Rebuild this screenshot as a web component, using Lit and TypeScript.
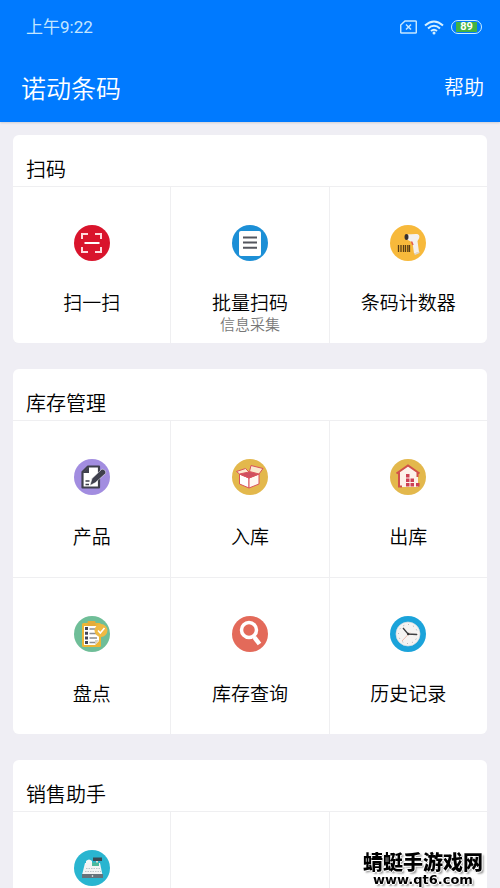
import { LitElement, html, svg, css, nothing } from "lit";
import { customElement, property } from "lit/decorators.js";

const icons: Record<string, unknown> = {
  scan: svg`<circle cx="18" cy="18" r="18" fill="#d9142c"/>
    <g fill="none" stroke="#fff" stroke-width="2">
      <path d="M8 14V9H14M21 9H27V14M27 22V27H21M14 27H8V22" stroke="#ffd9dd"/>
      <path d="M10.500 18H25.500"/></g>`,
  batch: svg`<circle cx="18" cy="18" r="18" fill="#1c8fd6"/>
    <rect x="7" y="6" width="22" height="25" rx="2" fill="#fff"/>
    <path d="M11 12.500H25M11 17.500H25M11 22.800H25" stroke="#54565e" stroke-width="2"/>`,
  counter: svg`<circle cx="18" cy="18" r="18" fill="#f7b93b"/>
    <path d="M8.500 20V27M11 20V27M13.500 20V27M15.500 20V27M17.800 20V27M19.500 20V27" stroke="#5a3d14" stroke-width="1.300"/>
    <path d="M16 9.500L26 9C29 9 30 11 29 13.500L27.500 16L29 27L24 28.500L22.500 17.500L16 14Z" fill="#f3f0ee"/>
    <path d="M24 28.500L29.500 26.500V28L25 30Z" fill="#ddd6cf"/>
    <ellipse cx="16.500" cy="12" rx="2" ry="3" fill="#38302e"/>
    <path d="M21.500 16.500L23 20" stroke="#e35a4d" stroke-width="1.500"/>`,
  product: svg`<circle cx="18" cy="18" r="18" fill="#a28de0"/>
    <path d="M14 7.500H25V28.500H8.500V13Z" fill="#fff" stroke="#3f404d" stroke-width="2.200" stroke-linejoin="round"/>
    <path d="M8.500 14L15 7.500V14Z" fill="#3f404d"/>
    <path d="M11.500 22H15.500M11.500 25.500H15" stroke="#3f404d" stroke-width="1.500"/>
    <path d="M16 26.500L18 19.500L27.500 10.500C29 9.500 32.500 11.500 31.500 14.500L21.500 23.500Z" fill="#3f404d" stroke="#fff" stroke-width=".5"/>`,
  inbound: svg`<circle cx="18" cy="18" r="18" fill="#e3b84c"/>
    <g stroke="#d9535c" stroke-width="1" stroke-linejoin="round">
      <path d="M7.500 15L17 19V29L7.500 25Z" fill="#fff"/>
      <path d="M17 19L27 15V25L17 29Z" fill="#fff8f2"/>
      <path d="M7.500 15L16 12.500L27 15L17 19Z" fill="#cf5060"/>
      <path d="M7.500 15L4.500 12.500L13.500 9.500L17 13Z" fill="#fbe9cf"/>
      <path d="M17.500 12.500L19 6.500L31 9.500L27 15Z" fill="#fbe9cf"/>
    </g>`,
  outbound: svg`<circle cx="18" cy="18" r="18" fill="#e3b84c"/>
    <path d="M9 13L18 7L28 13V28H9Z" fill="#fdf1eb"/>
    <path d="M6.500 14.500L18 6.500L29.500 14.500M9 13.500V27.500H12M27.500 13.500V18" fill="none" stroke="#d1504a" stroke-width="2"/>
    <path d="M16 15h3.500v3.500H16zM16 19.500h3.500v3.500H16zM20.500 19.500H24v3.500h-3.500zM16 24h3.500v3.500H16zM20.500 24H24v3.500h-3.500zM26 24h3.500v3.500H26z" fill="#cd4054"/>`,
  check: svg`<circle cx="18" cy="18" r="18" fill="#6fbe98"/>
    <rect x="8" y="7" width="19" height="24" rx="1.500" fill="#edb536"/>
    <path d="M10 10H25V25L21 29H10Z" fill="#fff"/>
    <path d="M25 24L21 29V24Z" fill="#d7d2c8"/>
    <rect x="13.500" y="5" width="8" height="5" rx="1" fill="#e4ac3b"/>
    <path d="M12.500 11V28" stroke="#414556" stroke-width="3" stroke-dasharray="3 1.700"/>
    <path d="M15.500 13H21M15.500 17.500H23M15.500 22H23M15.500 26.500H21" stroke="#8c8d90" stroke-width="1.500"/>
    <circle cx="27" cy="14.500" r="6.500" fill="#efb943"/>
    <path d="M24 14.500L26.300 17L30.500 12" fill="none" stroke="#fff" stroke-width="1.600"/>`,
  search: svg`<circle cx="18" cy="18" r="18" fill="#e36a5a"/>
    <circle cx="17" cy="14" r="7.500" fill="none" stroke="#fff" stroke-width="3.500"/>
    <path d="M21 19.500L23 22" stroke="#fff" stroke-width="3"/>
    <path d="M22.500 21.500L27.500 28" stroke="#fff" stroke-width="4.500"/>`,
  history: svg`<circle cx="18" cy="18" r="18" fill="#1ba3da"/>
    <circle cx="18" cy="18" r="12" fill="#f5f3f2" stroke="#d8dde0" stroke-width=".7"/>
    <circle cx="18" cy="18" r="9.500" fill="none" stroke="#9a9a9a" stroke-width="1" stroke-dasharray=".8 4.170"/>
    <path d="M18.500 18.500L13 12M17 18L27 18.500" stroke="#3f3f42" stroke-width="1.300"/>
    <path d="M20 16.500L12 25" stroke="#e8a08e" stroke-width=".7"/>
    <circle cx="18.300" cy="18" r="1.200" fill="#333"/>`,
  register: svg`<circle cx="18" cy="18" r="18" fill="#29b5d0"/>
    <path d="M12 11Q15 8 18 11V17H12Z" fill="#f4f7f7"/>
    <path d="M19 7.500H28V11H19Z" fill="#3b4a53"/><path d="M22 11H24V13H22Z" fill="#ddd"/>
    <path d="M11 13H26L28.500 25H8Z" fill="#f3f4f4"/>
    <path d="M18 12.500H25V16H18Z" fill="#4cb99c"/>
    <path d="M12 18.500H26M11 21.500H27" stroke="#bcc5c9" stroke-width="1" stroke-dasharray="1.500 1"/>
    <path d="M8 24H29V28H8Z" fill="#66727a"/><circle cx="18.500" cy="26" r=".8" fill="#fff"/>`,
};

interface Entry { icon?: string; label?: string; note?: string; }
interface Section { title: string; entries: Entry[]; }

const sections: Section[] = [
  { title: "扫码", entries: [
    { icon: "scan", label: "扫一扫" },
    { icon: "batch", label: "批量扫码", note: "信息采集" },
    { icon: "counter", label: "条码计数器" },
  ] },
  { title: "库存管理", entries: [
    { icon: "product", label: "产品" },
    { icon: "inbound", label: "入库" },
    { icon: "outbound", label: "出库" },
    { icon: "check", label: "盘点" },
    { icon: "search", label: "库存查询" },
    { icon: "history", label: "历史记录" },
  ] },
  { title: "销售助手", entries: [{ icon: "register" }, {}, {}] },
];

@customElement("menu-card")
class MenuCard extends LitElement {
  @property({ attribute: false }) section!: Section;

  static styles = css`
    :host { display: block; background: #fff; border-radius: 6px; overflow: hidden; }
    h2 { margin: 0; padding: 19px 13px 2px; font-size: 20px; line-height: 30px; font-weight: inherit; color: #000; }
    .grid { display: grid; grid-template-columns: repeat(3, 1fr); gap: 1px; padding-top: 1px; background: #efeff1; }
    .cell { display: flex; flex-direction: column; align-items: center; min-height: 156px; box-sizing: border-box;
      padding: 38px 0 0; border: 0; background: #fff; font: inherit; color: #000; }
    .icon { width: 36px; height: 36px; display: block; }
    .label { margin-top: 27px; font-size: 19px; line-height: 28px; }
    .note { font-size: 15px; line-height: 16px; color: #777; }
  `;

  render() {
    return html`
      <h2>${this.section.title}</h2>
      <div class="grid">
        ${this.section.entries.map((e) => e.icon
          ? html`<button class="cell" type="button">
              <svg class="icon" viewBox="0 0 36 36" aria-hidden="true">${icons[e.icon]}</svg>
              ${e.label ? html`<span class="label">${e.label}</span>` : nothing}
              ${e.note ? html`<span class="note">${e.note}</span>` : nothing}
            </button>`
          : html`<div class="cell"></div>`)}
      </div>`;
  }
}

@customElement("app-root")
class AppRoot extends LitElement {
  static styles = css`
    :host { display: flex; flex-direction: column; height: 100vh; overflow: hidden; background: #efeef4;
      font-family: "Noto Sans CJK SC", sans-serif; font-weight: 350; }
    header { flex: none; background: #007aff; color: #fff; box-shadow: 0 1px 2px #0002; }
    .status { display: flex; align-items: center; justify-content: space-between; height: 54px; padding: 0 18px 0 26px; color: #c4e6ff; }
    .time { font-size: 17px; line-height: 24px; font-weight: 400; font-family: Roboto, "Noto Sans CJK SC", sans-serif; }
    .signals { display: flex; align-items: center; gap: 7px; }
    .signals svg { display: block; }
    .battery { box-sizing: border-box; width: 31px; height: 14px; padding: 1px 4px; border: 1px solid #cbeeff; border-radius: 7px; }
    .level { display: block; background: #43b244; color: #fff; font: 700 11px/10px Roboto, sans-serif; text-align: center; }
    .bar { display: flex; align-items: center; justify-content: space-between; height: 66px; padding: 0 16px 2px 21px; }
    h1 { margin: 0; font-size: 25px; line-height: 36px; font-weight: inherit; }
    .help { font-size: 20px; line-height: 30px; color: #fff; text-decoration: none; }
    main { flex: 1; min-height: 0; overflow: hidden; display: flex; flex-direction: column; gap: 26px; padding: 13px 13px 0; }
    menu-card { flex: none; }
    .mark { position: fixed; right: 17px; bottom: 0; text-align: center; color: #000; font-weight: 900;
      text-shadow: 1px 0 #fff, -1px 0 #fff, 0 1px #fff, 0 -1px #fff, 2px 2px 2px #0006; }
    .site { font-size: 20px; line-height: 20px; }
    .url { font: 700 13px/16px "DejaVu Sans", sans-serif; }
  `;

  render() {
    return html`
      <header>
        <div class="status">
          <span class="time">上午9:22</span>
          <div class="signals">
            <svg width="17" height="14" viewBox="0 0 17 14" fill="none" stroke="currentColor" stroke-width="1.500" aria-hidden="true">
              <path d="M5 1H15.500Q16.300 1 16.300 1.800V12.200Q16.300 13 15.500 13H1.500Q.7 13 .7 12.200V5Z"/><path d="M6 4.500L11 9.500M11 4.500L6 9.500"/>
            </svg>
            <svg width="20" height="15" viewBox="0 0 20 15" fill="none" stroke="#d5f0ff" stroke-width="2" aria-hidden="true">
              <path d="M1 5.500Q10-2.500 19 5.500M4 8.500Q10 3 16 8.500M7 11Q10 8.500 13 11"/><circle cx="10" cy="13" r="1.500" fill="#d5f0ff" stroke="none"/>
            </svg>
            <span class="battery"><span class="level">89</span></span>
          </div>
        </div>
        <div class="bar">
          <h1>诺动条码</h1>
          <a class="help" href="#help">帮助</a>
        </div>
      </header>
      <main>${sections.map((s) => html`<menu-card .section=${s}></menu-card>`)}</main>
      <div class="mark">
        <div class="site">蜻蜓手游戏网</div>
        <div class="url">www.qt6.com</div>
      </div>`;
  }
}
